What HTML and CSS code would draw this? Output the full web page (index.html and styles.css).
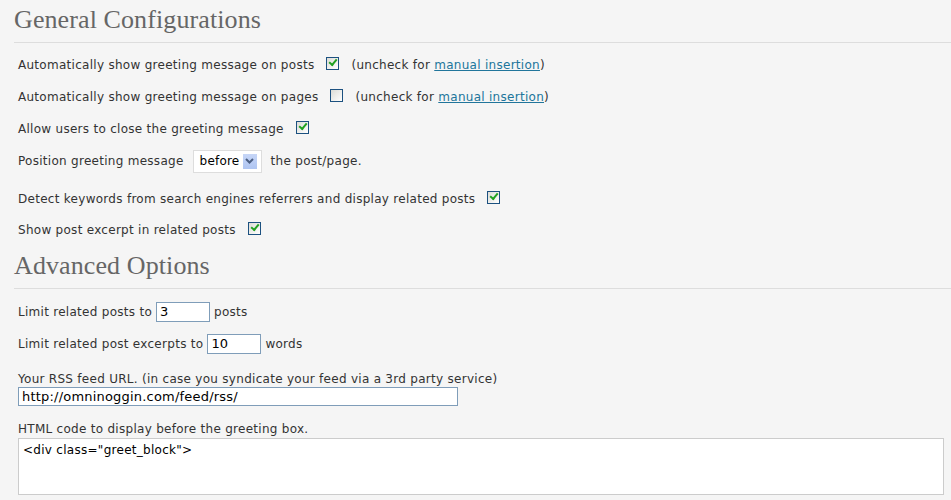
FILE: index.html
```html
<!DOCTYPE html>
<html>
<head>
<meta charset="utf-8">
<link rel="stylesheet" href="styles.css">
</head>
<body>
<div class="wrap">
  <h2 class="heading">General Configurations</h2>
  <div class="row r1"><span>Automatically show greeting message on posts</span><span class="cb checked"></span><span class="note">(uncheck for <a href="#">manual insertion</a>)</span></div>
  <div class="row r2"><span>Automatically show greeting message on pages</span><span class="cb"></span><span class="note">(uncheck for <a href="#">manual insertion</a>)</span></div>
  <div class="row r3"><span>Allow users to close the greeting message</span><span class="cb checked"></span></div>
  <div class="row r4"><span>Position greeting message</span><span class="select"><span class="sel-text">before</span><span class="sel-btn"><svg width="9" height="6" viewBox="0 0 9 6"><path d="M1 1 L4.5 4.5 L8 1" fill="none" stroke="#4d6185" stroke-width="2"/></svg></span></span><span>the post/page.</span></div>
  <div class="row r5"><span>Detect keywords from search engines referrers and display related posts</span><span class="cb checked"></span></div>
  <div class="row r6"><span>Show post excerpt in related posts</span><span class="cb checked"></span></div>

  <h2 class="heading h-adv">Advanced Options</h2>
  <div class="row r7"><span>Limit related posts to</span><span class="input small">3</span><span>posts</span></div>
  <div class="row r8"><span>Limit related post excerpts to</span><span class="input small">10</span><span>words</span></div>
  <div class="label l1">Your RSS feed URL. (in case you syndicate your feed via a 3rd party service)</div>
  <div class="input url">http://omninoggin.com/feed/rss/</div>
  <div class="label l2">HTML code to display before the greeting box.</div>
  <div class="textarea">&lt;div class="greet_block"&gt;</div>
</div>
</body>
</html>
```
FILE: styles.css
```css
html, body {
  margin: 0;
  padding: 0;
  background: #f5f5f5;
}
body {
  font-family: "DejaVu Sans", Verdana, sans-serif;
  font-size: 12px;
  letter-spacing: 0.28px;
  color: #333;
}
.wrap {
  padding: 0 0 0 14px;
  overflow: hidden;
  height: 500px;
}
.heading {
  font-family: "Liberation Serif", "Times New Roman", serif;
  font-weight: normal;
  font-size: 26px;
  letter-spacing: 0.1px;
  color: #666;
  margin: 0;
  padding: 6px 0 8px 0;
  line-height: 28px;
  border-bottom: 1px solid #ddd;
}
.h-adv {
  margin-top: 6px;
}
.row {
  display: flex;
  align-items: center;
  padding-left: 4px;
  height: 20px;
  margin-top: 12px;
}
.r4 { margin-top: 11px; height: 22px; }
.r5 { margin-top: 17px; }
.r6 { margin-top: 11px; }
.r7 { margin-top: 13px; }
.cb {
  width: 11px;
  height: 11px;
  border: 1px solid #1c5180;
  background: linear-gradient(135deg, #dcdcd6, #fff);
  margin-left: 12px;
  position: relative;
  top: -2px;
}
.cb.checked::after {
  content: "";
  position: absolute;
  left: 2px;
  top: 1px;
  width: 6px;
  height: 3px;
  border-left: 2px solid #21a121;
  border-bottom: 2px solid #21a121;
  transform: rotate(-50deg);
  transform-origin: center;
}
.note {
  margin-left: 12px;
}
.note a {
  color: #21759b;
}
.select {
  display: flex;
  align-items: center;
  margin-left: 9px;
  margin-right: 9px;
  width: 69px;
  height: 23px;
  border: 1px solid #ddd;
  background: #fff;
  color: #000;
  font-size: 12px;
  letter-spacing: 0.2px;
  box-sizing: border-box;
  padding: 0 4px 0 6px;
  justify-content: space-between;
}
.sel-btn {
  width: 14px;
  height: 15px;
  background: linear-gradient(#c6d6f7, #afc5f2);
  display: flex;
  align-items: center;
  justify-content: center;
}
.input {
  background: #fff;
  border: 1px solid #7f9db9;
  box-sizing: border-box;
  color: #000;
  padding: 0 3px;
  height: 20px;
  line-height: 18px;
  font-size: 13px;
  letter-spacing: 0.2px;
}
.small {
  width: 54px;
  margin: 0 4px 0 4px;
}
.label {
  padding-left: 4px;
  line-height: 14px;
}
.l1 { margin-top: 18px; }
.url {
  margin-left: 4px;
  width: 440px;
  height: 19px;
  line-height: 17px;
  margin-top: 1px;
}
.l2 { margin-top: 16px; }
.textarea {
  margin-left: 4px;
  margin-top: 2px;
  width: 926px;
  height: 57px;
  box-sizing: border-box;
  border: 1px solid #ccc;
  background: #fff;
  color: #000;
  padding: 4px 4px;
}
```
